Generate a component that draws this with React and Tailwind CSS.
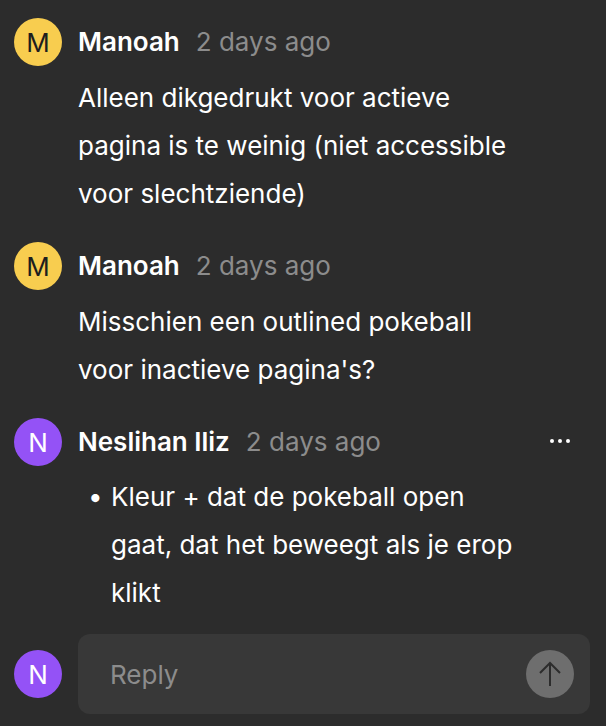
import React from 'react';

const Avatar = ({ letter, color }) => (
    <div
        className={`w-12 h-12 rounded-full flex items-center justify-center shrink-0 text-[26px] ${color}`}
    >
        {letter}
    </div>
);

const Comment = ({ name, letter, color, children, menu }) => (
    <div className="flex gap-4">
        <Avatar letter={letter} color={color} />
        <div className="flex-1 flex flex-col gap-2">
            <div className="h-12 flex items-center text-[26px] -mt-[1px]">
                <span className="font-semibold text-white">{name}</span>
                <span className="ml-[16px] text-[#8c8c8c]">2 days ago</span>
                {menu && (
                    <div className="ml-auto mr-[20px] flex gap-[4px]">
                        <span className="w-[4px] h-[4px] rounded-full bg-white" />
                        <span className="w-[4px] h-[4px] rounded-full bg-white" />
                        <span className="w-[4px] h-[4px] rounded-full bg-white" />
                    </div>
                )}
            </div>
            <div className="text-[26px] leading-[48px] text-white mt-[1px]">{children}</div>
        </div>
    </div>
);

export default function App() {
    return (
        <div
            className="w-[606px] h-[726px] bg-[#2c2c2c] pt-[18px] pl-[14px] pr-[16px] flex flex-col gap-6"
            style={{ fontFamily: 'Inter, "Noto Sans", sans-serif' }}
        >
            <Comment name="Manoah" letter="M" color="bg-[#f8cd4f] text-[#1e1e1e]">
                Alleen dikgedrukt voor actieve
                <br />
                pagina is te weinig (niet accessible
                <br />
                voor slechtziende)
            </Comment>

            <Comment name="Manoah" letter="M" color="bg-[#f8cd4f] text-[#1e1e1e]">
                Misschien een outlined pokeball
                <br />
                voor inactieve pagina's?
            </Comment>

            <Comment name="Neslihan Iliz" letter="N" color="bg-[#9452f6] text-white" menu>
                <div className="flex -mt-[1px]">
                    <span className="w-[33px] pl-[10px] shrink-0">•</span>
                    <div>
                        Kleur + dat de pokeball open
                        <br />
                        gaat, dat het beweegt als je erop
                        <br />
                        klikt
                    </div>
                </div>
            </Comment>

            <div className="flex items-center gap-4 -mt-[7px]">
                <Avatar letter="N" color="bg-[#9452f6] text-white" />
                <div className="flex-1 h-20 rounded-xl bg-[#383838] flex items-center pl-8 pr-[16px]">
                    <span className="text-[26px] text-[#8c8c8c]">Reply</span>
                    <div className="ml-auto w-12 h-12 rounded-full bg-[#6e6e6e] flex items-center justify-center">
                        <svg width="24" height="28" viewBox="0 0 24 28" fill="none" stroke="#2c2c2c" strokeWidth="2">
                            <path d="M12 26V3M2 13L12 3l10 10" />
                        </svg>
                    </div>
                </div>
            </div>
        </div>
    );
}
